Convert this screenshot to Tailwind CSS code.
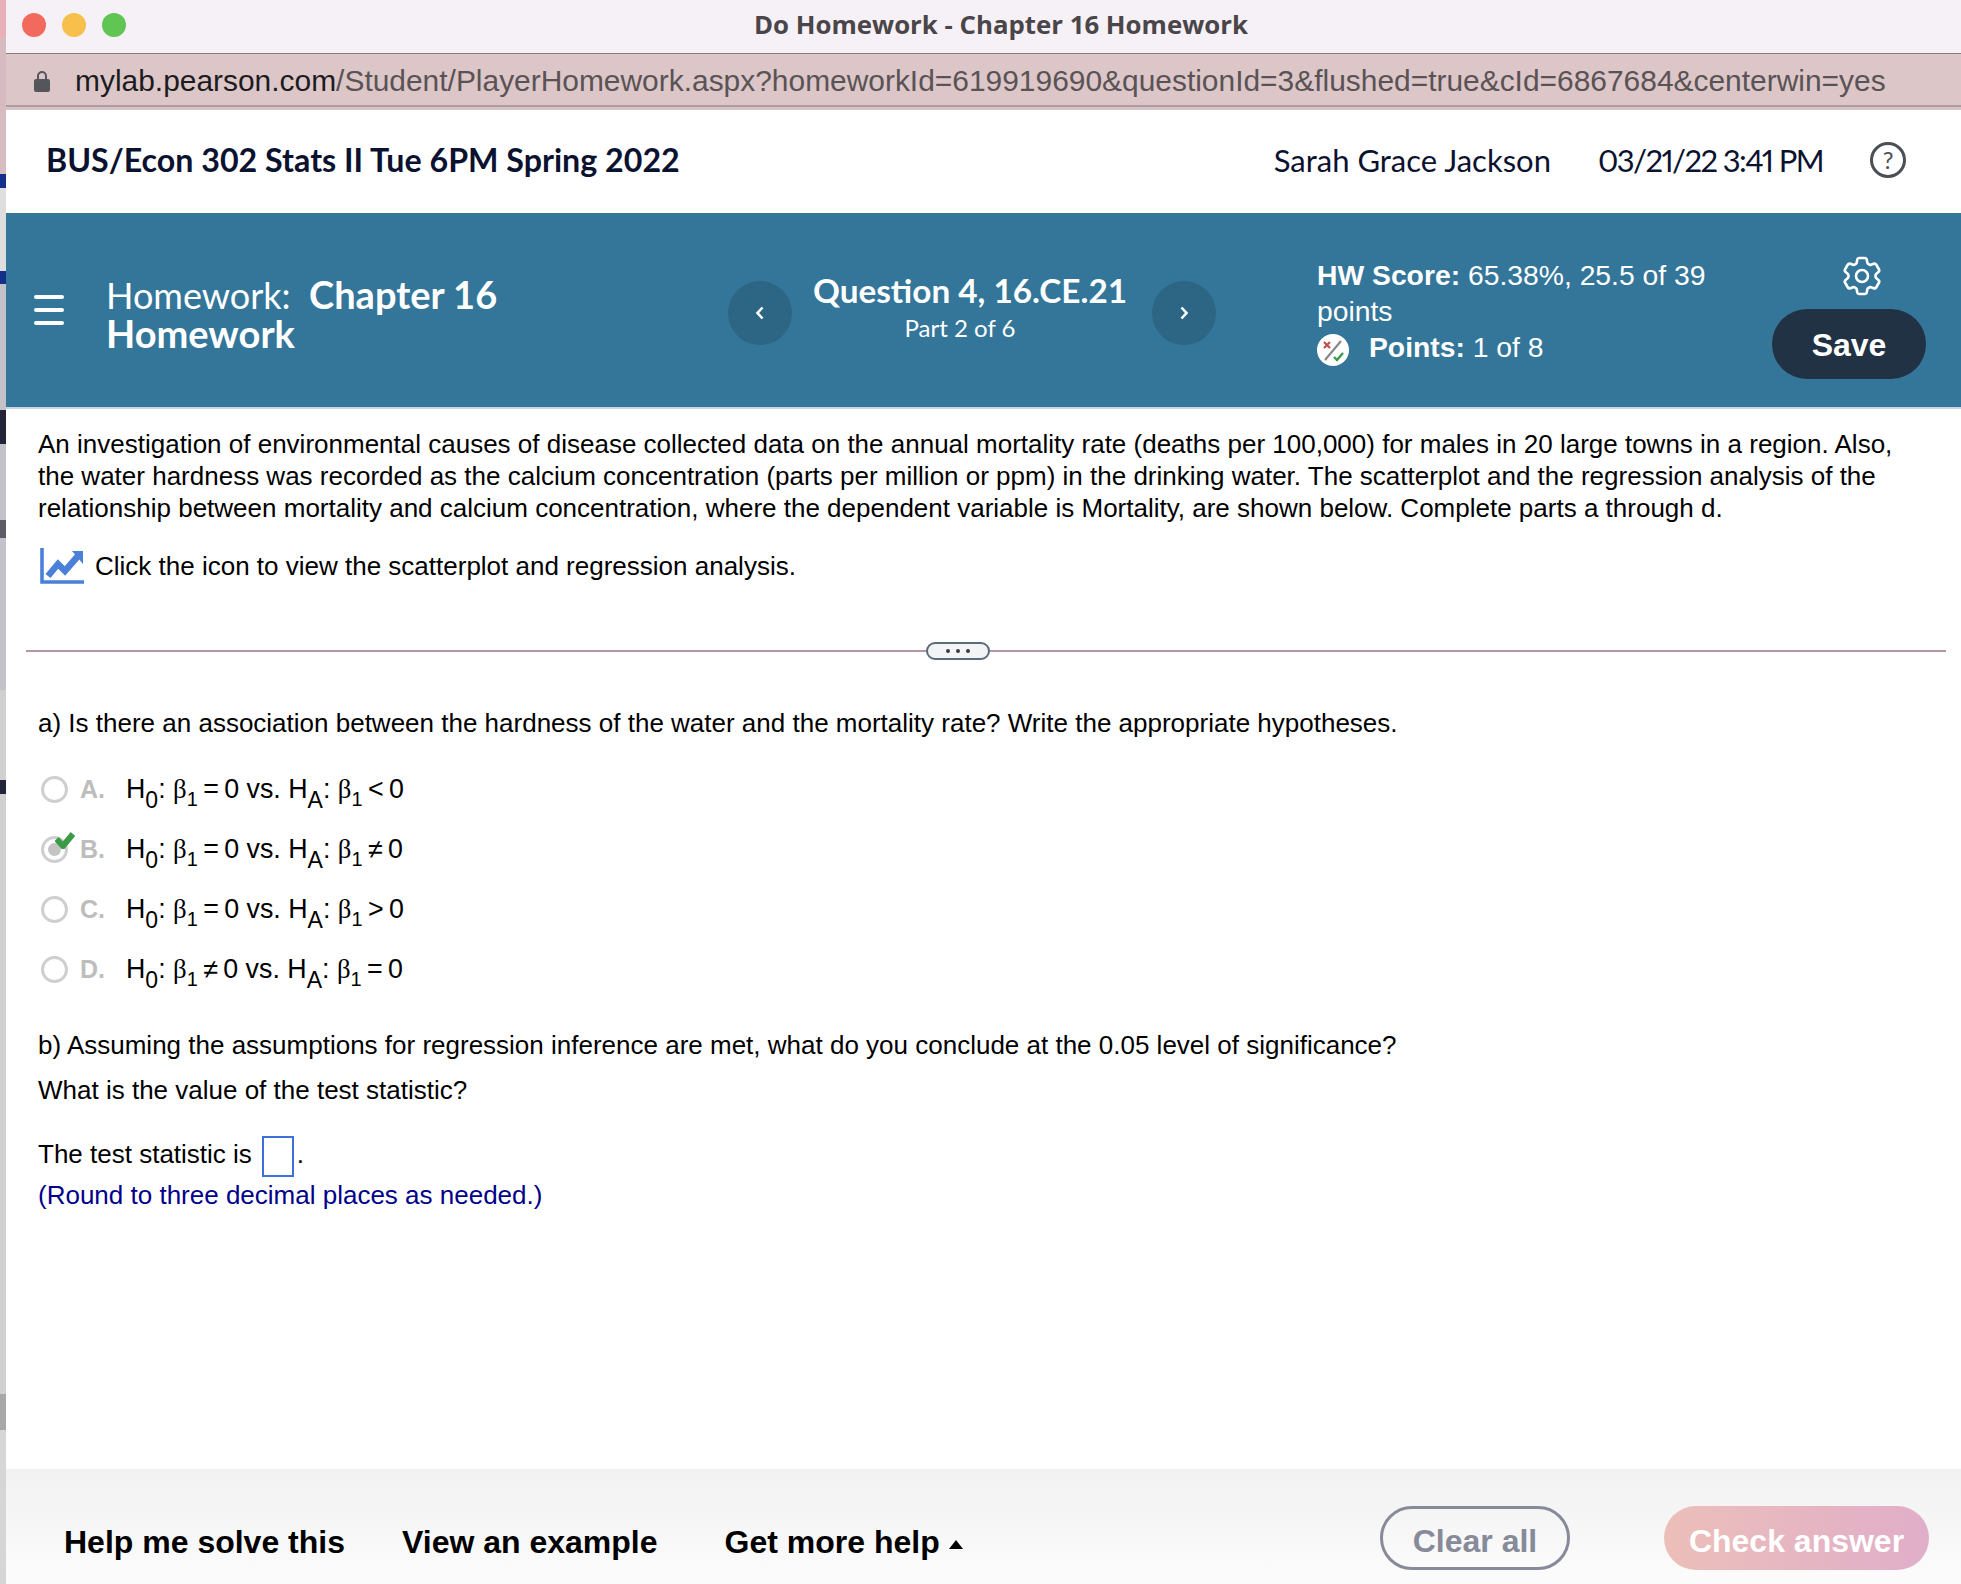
<!DOCTYPE html>
<html lang="en">
<head>
  <meta charset="UTF-8" />
  <title>Do Homework - Chapter 16 Homework</title>
  <script src="https://cdn.jsdelivr.net/npm/@tailwindcss/browser@4"></script>
</head>
<body class="bg-white overflow-hidden">
<div class="w-[1961px] h-[1584px] flex font-['Liberation_Sans',Arial,sans-serif] text-black overflow-hidden">
  <!-- desktop peeking out on the left -->
  <div class="w-[6px] h-full flex flex-col shrink-0 bg-[#cfcfcf]">
    <div class="h-[38px] bg-[#e8b0b8]"></div>
    <div class="h-[136px] bg-[#d6bcc0]"></div>
    <div class="h-[14px] bg-[#12308a]"></div>
    <div class="h-[83px] bg-[#dedede]"></div>
    <div class="h-[13px] bg-[#12308a]"></div>
    <div class="h-[126px] bg-[#c2c2c8]"></div>
    <div class="h-[34px] bg-[#23233a]"></div>
    <div class="h-[76px] bg-[#c2c2c8]"></div>
    <div class="h-[18px] bg-[#5c5c66]"></div>
    <div class="h-[152px] bg-[#c2c2c8]"></div>
    <div class="h-[90px] bg-[#d0d0d0]"></div>
    <div class="h-[14px] bg-[#23233a]"></div>
    <div class="h-[600px] bg-[#d0d0d0]"></div>
    <div class="h-[36px] bg-[#a8a8a8]"></div>
    <div class="flex-1 bg-[#d6d6d6]"></div>
  </div>

  <div class="flex-1 flex flex-col min-w-0">
    <!-- title bar -->
    <div class="h-[54px] shrink-0 bg-[#f6f1f7] border-b border-[#8a7a7e] flex items-center pl-[16px] pb-[3px]">
      <div class="flex gap-[16px]">
        <span class="w-[24px] h-[24px] rounded-full bg-[#f26a5d]"></span>
        <span class="w-[24px] h-[24px] rounded-full bg-[#f7c04c]"></span>
        <span class="w-[24px] h-[24px] rounded-full bg-[#61c554]"></span>
      </div>
      <div class="ml-[628px] -mt-[2px] text-[25.8px] font-bold text-[#4a4548] font-['Open_Sans',sans-serif]">Do Homework - Chapter 16 Homework</div>
    </div>
    <!-- url bar -->
    <div class="h-[53px] shrink-0 bg-[#dcc6c8] border-b-[2px] border-[#ad9ca1] flex items-center pl-[28px] pt-[3px]">
      <svg class="w-[16px] h-[22px] shrink-0" viewBox="0 0 16 22"><path d="M4 9V6a4 4 0 0 1 8 0v3" fill="none" stroke="#55555c" stroke-width="2"/><rect x="0" y="9" width="16" height="13" rx="2" fill="#55555c"/></svg>
      <div class="ml-[25px] text-[29.93px] text-[#5a5355] whitespace-nowrap"><span class="text-[#1c1c1e]">mylab.pearson.com</span>/Student/PlayerHomework.aspx?homeworkId=619919690&amp;questionId=3&amp;flushed=true&amp;cId=6867684&amp;centerwin=yes</div>
    </div>
    <div class="h-[3px] shrink-0 bg-[#d7c3c6]"></div>
    <!-- course header -->
    <div class="h-[103px] shrink-0 flex items-center pl-[40px] pr-[55px] pb-[3px] text-[#0b1230] font-['Lato',sans-serif] text-[31px]">
      <div class="font-bold text-[32.2px]">BUS/Econ 302 Stats II Tue 6PM Spring 2022</div>
      <div class="ml-auto">Sarah Grace Jackson</div>
      <div class="ml-[47px] proportional-nums tracking-[-1.6px]">03/21/22 3:41 PM</div>
      <div class="ml-[47px] w-[36px] h-[36px] rounded-full border-[3px] border-[#4a4f55] flex items-center justify-center text-[24px] text-[#4a4f55]">?</div>
    </div>
    <!-- teal bar -->
    <div class="h-[196px] shrink-0 bg-[#33769a] border-b-[2px] border-[#c5d5e5] text-white flex items-center pl-[28px] pr-[35px]">
      <div class="w-[30px] flex flex-col gap-[9px] shrink-0">
        <span class="h-[4px] bg-white rounded-full"></span>
        <span class="h-[4px] bg-white rounded-full"></span>
        <span class="h-[4px] bg-white rounded-full"></span>
      </div>
      <div class="ml-[42px] mt-[6px] w-[622px] shrink-0 text-[36px] leading-[38px] font-['Lato',sans-serif]">
        <div>Homework:&nbsp; <b class="text-[38px]">Chapter 16</b></div>
        <div class="font-bold text-[38px]">Homework</div>
      </div>
      <button class="mt-[5px] w-[64px] h-[64px] rounded-full bg-[#2d6584] flex items-center justify-center shrink-0">
        <svg class="w-[12px] h-[18px]" viewBox="0 0 12 18"><path d="M8.5 3.5 3.5 9l5 5.5" fill="none" stroke="#fff" stroke-width="2.6"/></svg>
      </button>
      <div class="w-[360px] -mt-[7px] shrink-0 text-center font-['Lato',sans-serif]">
        <div class="text-[33.3px] font-bold leading-[40px] pr-[4px]">Question 4, 16.CE.21</div>
        <div class="text-[24px] leading-[32px] mt-[2px] pr-[24px]">Part 2 of 6</div>
      </div>
      <button class="mt-[5px] w-[64px] h-[64px] rounded-full bg-[#2d6584] flex items-center justify-center shrink-0">
        <svg class="w-[12px] h-[18px]" viewBox="0 0 12 18"><path d="M3.5 3.5 8.5 9l-5 5.5" fill="none" stroke="#fff" stroke-width="2.6"/></svg>
      </button>
      <div class="ml-[101px] mt-[2px] w-[420px] shrink-0 text-[28.3px] leading-[36px]">
        <div><b>HW Score:</b> 65.38%, 25.5 of 39<br />points</div>
        <div class="flex items-center">
          <svg class="w-[32px] h-[32px] mt-[5px]" viewBox="0 0 32 32"><circle cx="16" cy="16" r="16" fill="#fff"/><path d="M8 26 24 7" stroke="#888" stroke-width="2.2"/><path d="M7 8l6 6M13 8l-6 6" stroke="#c0504d" stroke-width="2.2"/><path d="M17 23l3 3 6-7" fill="none" stroke="#3a9a4a" stroke-width="2.4"/></svg>
          <span class="ml-[20px]"><b>Points:</b> 1 of 8</span>
        </div>
      </div>
      <div class="ml-auto mt-[11px] w-[154px] shrink-0 flex flex-col items-center">
        <svg class="w-[48px] h-[48px] ml-[26px]" viewBox="0 0 24 24" fill="none" stroke="#fff" stroke-width="1.3" stroke-linejoin="round"><path d="M9.594 3.94c.09-.542.56-.94 1.11-.94h2.593c.55 0 1.02.398 1.11.94l.213 1.281c.063.374.313.686.645.87.074.04.147.083.22.127.325.196.72.257 1.075.124l1.217-.456a1.125 1.125 0 0 1 1.37.49l1.296 2.247a1.125 1.125 0 0 1-.26 1.431l-1.003.827c-.293.241-.438.613-.43.992a7.723 7.723 0 0 1 0 .255c-.008.378.137.75.43.991l1.004.827c.424.35.534.955.26 1.43l-1.298 2.247a1.125 1.125 0 0 1-1.369.491l-1.217-.456c-.355-.133-.75-.072-1.076.124a6.47 6.47 0 0 1-.22.128c-.331.183-.581.495-.644.869l-.213 1.281c-.09.543-.56.94-1.11.94h-2.594c-.55 0-1.019-.398-1.11-.94l-.213-1.281c-.062-.374-.312-.686-.644-.87a6.52 6.52 0 0 1-.22-.127c-.325-.196-.72-.257-1.076-.124l-1.217.456a1.125 1.125 0 0 1-1.369-.49l-1.297-2.247a1.125 1.125 0 0 1 .26-1.431l1.004-.827c.292-.24.437-.613.43-.991a6.932 6.932 0 0 1 0-.255c.007-.38-.138-.751-.43-.992l-1.004-.827a1.125 1.125 0 0 1-.26-1.43l1.297-2.247a1.125 1.125 0 0 1 1.37-.491l1.216.456c.356.133.751.072 1.076-.124.072-.044.146-.086.22-.128.332-.183.582-.495.644-.869l.214-1.28Z"/><circle cx="12" cy="12" r="3"/></svg>
        <button class="mt-[9px] pt-[2px] w-[154px] h-[70px] rounded-full bg-[#203243] text-[32px] font-bold text-white">Save</button>
      </div>
    </div>
    <!-- question -->
    <div class="flex-1 flex flex-col text-[26px] leading-[32px] min-h-0">
      <div class="px-[32px] pt-[19px]">
        <p>An investigation of environmental causes of disease collected data on the annual mortality rate (deaths per 100,000) for males in 20 large towns in a region. Also, the water hardness was recorded as the calcium concentration (parts per million or ppm) in the drinking water. The scatterplot and the regression analysis of the relationship between mortality and calcium concentration, where the dependent variable is Mortality, are shown below. Complete parts a through d.</p>
        <div class="flex items-center mt-[24px] ml-[2px]">
          <svg class="w-[44px] h-[36px] shrink-0" viewBox="0 0 44 36"><path d="M2 0v34h42" fill="none" stroke="#4a80d8" stroke-width="3.6"/><path d="M8 28 18 16l7 7L38 8" fill="none" stroke="#4a80d8" stroke-width="6.5"/><path d="M32 3h11v13z" fill="#4a80d8"/></svg>
          <span class="ml-[11px]">Click the icon to view the scatterplot and regression analysis.</span>
        </div>
      </div>
      <div class="mt-[66px] ml-[20px] mr-[15px] h-[2px] bg-[#b596a6] flex items-center justify-center">
        <div class="w-[64px] h-[18px] rounded-full border-[2px] border-[#5b6b7c] bg-[#f3f4f6] flex items-center justify-center gap-[6px] mr-[56px]">
          <span class="w-[4px] h-[4px] rounded-full bg-[#3a3a44]"></span>
          <span class="w-[4px] h-[4px] rounded-full bg-[#3a3a44]"></span>
          <span class="w-[4px] h-[4px] rounded-full bg-[#3a3a44]"></span>
        </div>
      </div>
      <div class="px-[32px] pt-[55px]">
        <p>a) Is there an association between the hardness of the water and the mortality rate? Write the appropriate hypotheses.</p>
        <div class="mt-[20px] text-[26.8px]">
          <!-- A -->
          <div class="h-[60px] flex items-center">
            <span class="ml-[3px] w-[27px] h-[27px] rounded-full border-[3px] border-[#cfcfcf] shrink-0"></span>
            <span class="ml-[12px] w-[46px] font-bold text-[25px] text-[#bdbdbd]">A.</span>
            <span>H<sub class="text-[23px] -bottom-[10px]">0</sub>: <span class="font-['Liberation_Serif',serif]">β</span><sub class="text-[20px] -bottom-[8px]">1</sub>&thinsp;=&thinsp;0 vs. H<sub class="text-[23px] -bottom-[10px]">A</sub>: <span class="font-['Liberation_Serif',serif]">β</span><sub class="text-[20px] -bottom-[8px]">1</sub>&thinsp;&lt;&thinsp;0</span>
          </div>
          <!-- B -->
          <div class="h-[60px] flex items-center">
            <span class="relative ml-[3px] w-[27px] h-[27px] rounded-full border-[3px] border-[#cfcfcf] shrink-0 flex items-center justify-center">
              <span class="w-[13px] h-[13px] rounded-full bg-[#c4c4c4]"></span>
              <svg class="absolute left-[11px] -top-[8px] w-[20px] h-[18px]" viewBox="0 0 20 18"><path d="M1.5 8 8 15 18 3" fill="none" stroke="#3d9a46" stroke-width="6"/></svg>
            </span>
            <span class="ml-[12px] w-[46px] font-bold text-[25px] text-[#bdbdbd]">B.</span>
            <span>H<sub class="text-[23px] -bottom-[10px]">0</sub>: <span class="font-['Liberation_Serif',serif]">β</span><sub class="text-[20px] -bottom-[8px]">1</sub>&thinsp;=&thinsp;0 vs. H<sub class="text-[23px] -bottom-[10px]">A</sub>: <span class="font-['Liberation_Serif',serif]">β</span><sub class="text-[20px] -bottom-[8px]">1</sub>&thinsp;≠&thinsp;0</span>
          </div>
          <!-- C -->
          <div class="h-[60px] flex items-center">
            <span class="ml-[3px] w-[27px] h-[27px] rounded-full border-[3px] border-[#cfcfcf] shrink-0"></span>
            <span class="ml-[12px] w-[46px] font-bold text-[25px] text-[#bdbdbd]">C.</span>
            <span>H<sub class="text-[23px] -bottom-[10px]">0</sub>: <span class="font-['Liberation_Serif',serif]">β</span><sub class="text-[20px] -bottom-[8px]">1</sub>&thinsp;=&thinsp;0 vs. H<sub class="text-[23px] -bottom-[10px]">A</sub>: <span class="font-['Liberation_Serif',serif]">β</span><sub class="text-[20px] -bottom-[8px]">1</sub>&thinsp;&gt;&thinsp;0</span>
          </div>
          <!-- D -->
          <div class="h-[60px] flex items-center">
            <span class="ml-[3px] w-[27px] h-[27px] rounded-full border-[3px] border-[#cfcfcf] shrink-0"></span>
            <span class="ml-[12px] w-[46px] font-bold text-[25px] text-[#bdbdbd]">D.</span>
            <span>H<sub class="text-[23px] -bottom-[10px]">0</sub>: <span class="font-['Liberation_Serif',serif]">β</span><sub class="text-[20px] -bottom-[8px]">1</sub>&thinsp;≠&thinsp;0 vs. H<sub class="text-[23px] -bottom-[10px]">A</sub>: <span class="font-['Liberation_Serif',serif]">β</span><sub class="text-[20px] -bottom-[8px]">1</sub>&thinsp;=&thinsp;0</span>
          </div>
        </div>
        <p class="mt-[30px]">b) Assuming the assumptions for regression inference are met, what do you conclude at the 0.05 level of significance?</p>
        <p class="mt-[13px]">What is the value of the test statistic?</p>
        <div class="mt-[30px] flex items-start h-[41px]"><span class="pt-[2px]">The test statistic is</span><span class="ml-[10px] w-[32px] h-[41px] border-[2px] border-[#3f6fd8] bg-white"></span><span class="pt-[2px] ml-[3px]">.</span></div>
        <p class="mt-[2px] text-[#00008b]">(Round to three decimal places as needed.)</p>
      </div>
    </div>
    <!-- footer -->
    <div class="h-[115px] shrink-0 bg-gradient-to-b from-[#f1f1f1] to-[#fcfcfc] flex items-center pl-[58px] pr-[32px] pt-[23px] text-[32px] font-bold">
      <div class="flex items-center pt-[7px]">
        <span>Help me solve this</span>
        <span class="ml-[57px]">View an example</span>
        <span class="ml-[67px]">Get more help</span>
        <svg class="ml-[9px] mt-[6px] w-[14px] h-[9px]" viewBox="0 0 14 9"><path d="M7 0l7 9H0z" fill="#000"/></svg>
      </div>
      <button class="ml-auto pt-[5px] w-[190px] h-[64px] rounded-full border-[3px] border-[#868a99] text-[#868a99] font-bold">Clear all</button>
      <button class="ml-[94px] pt-[5px] w-[265px] h-[64px] rounded-full bg-gradient-to-r from-[#ecbfb9] to-[#e0aec9] text-white font-bold">Check answer</button>
    </div>
  </div>
</div>
</body>
</html>
